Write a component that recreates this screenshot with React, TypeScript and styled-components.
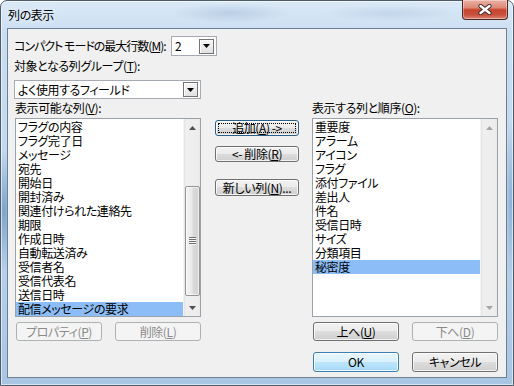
import React from "react";
import styled, { createGlobalStyle } from "styled-components";

const Global = createGlobalStyle`
  html, body { margin: 0; padding: 0; background: #ffffff; }
  body {
    font-family: "Noto Sans CJK JP", "Noto Sans", sans-serif;
    font-size: 12px;
    color: #000;
    font-feature-settings: "palt" 1;
    letter-spacing: -0.4px;
  }
  * { box-sizing: border-box; }
`;

const Window = styled.div`
  width: 514px;
  height: 386px;
  display: flex;
  flex-direction: column;
  border: 1px solid #4f5b68;
  border-radius: 7px 7px 0 0;
  box-shadow: inset 0 0 0 1px rgba(255, 255, 255, 0.55);
  background:
    radial-gradient(ellipse 60px 10px at 230px 12px, rgba(120, 150, 190, 0.28), transparent),
    radial-gradient(ellipse 70px 8px at 390px 12px, rgba(130, 160, 200, 0.22), transparent),
    radial-gradient(ellipse 10px 60px at 3px 210px, rgba(70, 120, 175, 0.55), transparent),
    radial-gradient(ellipse 6px 80px at 510px 200px, rgba(80, 130, 185, 0.45), transparent),
    linear-gradient(to bottom, #dae9f7 0%, #cadef1 9%, #bdd5ed 55%, #a8c5e3 100%);
`;

const TitleBar = styled.div`
  height: 27px;
  display: flex;
  align-items: flex-start;
  padding-left: 7px;
`;

const TitleText = styled.div`
  margin-top: 7px;
  font-size: 12px;
  line-height: 14px;
  color: #000;
  text-shadow: 0 0 6px rgba(255, 255, 255, 0.9);
`;

const CloseButton = styled.div`
  margin-left: auto;
  margin-right: 5px;
  margin-top: -1px;
  width: 46px;
  height: 20px;
  border: 1px solid #4d2a24;
  border-top: none;
  border-radius: 0 0 4px 4px;
  display: flex;
  align-items: center;
  justify-content: center;
  background: linear-gradient(
    to bottom,
    #eab1a5 0%,
    #dc8a78 40%,
    #c8442d 52%,
    #c95240 80%,
    #dc8a7a 100%
  );
  box-shadow: inset 0 0 0 1px rgba(255, 255, 255, 0.35);
`;

const Client = styled.div`
  flex: 1;
  margin: 0 6px 7px 6px;
  border: 1px solid #6d7f93;
  background: #f0f0f0;
  display: flex;
  flex-direction: column;
  padding: 7px 0 0 6px;
`;

const Row = styled.div`
  display: flex;
  align-items: center;
  height: 20px;
`;

const Label = styled.div<{ $w?: number; $mt?: number; $tight?: boolean }>`
  width: ${(p) => (p.$w ? `${p.$w}px` : "auto")};
  margin-top: ${(p) => p.$mt ?? 0}px;
  line-height: 14px;
  height: 14px;
  white-space: nowrap;
  letter-spacing: ${(p) => (p.$tight ? "-1px" : "inherit")};
`;

const Combo = styled.div<{ $w: number; $h: number; $mt?: number }>`
  width: ${(p) => p.$w}px;
  height: ${(p) => p.$h}px;
  margin-top: ${(p) => p.$mt ?? 0}px;
  border: 1px solid #a6abb3;
  background: #fff;
  display: flex;
  align-items: center;
  padding: 0 2px 0 3px;
`;

const ComboText = styled.div`
  flex: 1;
  line-height: 14px;
  white-space: nowrap;
`;

const DropButton = styled.div`
  width: 15px;
  height: 15px;
  border: 1px solid #747474;
  background: linear-gradient(to bottom, #f6f6f6, #e2e2e2);
  box-shadow: inset 1px 1px 0 #ffffff;
  display: flex;
  align-items: center;
  justify-content: center;
`;

const MainGrid = styled.div`
  margin-top: 2px;
  margin-left: 1px;
  display: grid;
  grid-template-columns: 186px 85px 186px;
  column-gap: 13px;
  align-items: start;
`;

const ListBox = styled.div`
  margin-top: 3px;
  width: 186px;
  height: 199px;
  border: 1px solid #9ba1a9;
  background: #ffffff;
  display: flex;
`;

const Items = styled.div`
  flex: 1;
  padding-top: 1px;
  overflow: hidden;
`;

const Item = styled.div<{ $selected?: boolean }>`
  height: 14px;
  line-height: 14px;
  padding-left: 2px;
  white-space: nowrap;
  background: ${(p) => (p.$selected ? "#8cbdf6" : "transparent")};
`;

const ScrollBar = styled.div`
  width: 17px;
  display: flex;
  flex-direction: column;
  background: linear-gradient(to right, #e2e2e2 0, #efefef 2px, #ededed 14px, #e6e6e6 17px);
  border-left: 1px solid #f4f4f4;
`;

const ArrowBox = styled.div`
  height: 17px;
  display: flex;
  align-items: center;
  justify-content: center;
`;

const Track = styled.div`
  flex: 1;
  display: flex;
  flex-direction: column;
  align-items: center;
`;

const Thumb = styled.div<{ $top: number; $h: number }>`
  margin-top: ${(p) => p.$top}px;
  width: 15px;
  height: ${(p) => p.$h}px;
  border: 1px solid #959595;
  border-radius: 2px;
  background: linear-gradient(to right, #f4f4f4 0%, #e9e9e9 45%, #dadada 55%, #d2d2d2 100%);
  box-shadow: inset 0 0 0 1px rgba(255, 255, 255, 0.6);
  display: flex;
  align-items: center;
  justify-content: center;
`;

const Grip = styled.div`
  width: 7px;
  height: 8px;
  background: repeating-linear-gradient(to bottom, #6f6f6f 0 1px, #f6f6f6 1px 2px);
`;

const MidColumn = styled.div`
  margin-top: 19px;
  justify-self: end;
  width: 84px;
  display: flex;
  flex-direction: column;
`;

const PushButton = styled.div<{
  $h?: number;
  $mt?: number;
  $disabled?: boolean;
  $default?: boolean;
  $focused?: boolean;
}>`
  position: relative;
  width: 86px;
  height: ${(p) => p.$h ?? 19}px;
  margin-top: ${(p) => p.$mt ?? 0}px;
  border: 1px solid
    ${(p) => (p.$disabled ? "#adb2b5" : p.$default ? "#3c7fb1" : p.$focused ? "#2a5f88" : "#707070")};
  border-radius: 3px;
  display: flex;
  align-items: center;
  justify-content: center;
  line-height: 14px;
  white-space: nowrap;
  color: ${(p) => (p.$disabled ? "#8a8a8a" : "#000")};
  background: ${(p) =>
    p.$disabled
      ? "#f4f4f4"
      : p.$default
      ? "linear-gradient(to bottom, #eaf6fd 0%, #d9f0fc 49%, #bee6fd 50%, #a7d9f5 100%)"
      : "linear-gradient(to bottom, #f2f2f2 0%, #ebebeb 49%, #dddddd 50%, #cfcfcf 100%)"};
  box-shadow: ${(p) => (p.$disabled ? "none" : "inset 0 0 0 1px rgba(255,255,255,0.75)")};

  &::after {
    content: "";
    display: ${(p) => (p.$focused ? "block" : "none")};
    position: absolute;
    inset: 2px;
    border: 1px dotted #000;
  }
`;

const MidButton = styled(PushButton)`
  width: 84px;
`;

const ButtonPair = styled.div<{ $mt: number }>`
  margin-top: ${(p) => p.$mt}px;
  padding-left: 1px;
  display: flex;
  justify-content: space-between;
`;

const FooterCell = styled.div`
  grid-column: 3;
`;

const Arrow = ({ up, color }: { up?: boolean; color: string }) => (
  <svg width="7" height="4" viewBox="0 0 7 4">
    <polygon points={up ? "3.5,0 7,4 0,4" : "0,0 7,0 3.5,4"} fill={color} />
  </svg>
);

const ComboArrow = () => (
  <svg width="7" height="4" viewBox="0 0 7 4">
    <polygon points="0,0 7,0 3.5,4" fill="#000" />
  </svg>
);

const CloseX = () => (
  <svg width="14" height="11" viewBox="0 0 14 11">
    <path d="M2.5 2 L11.5 9 M11.5 2 L2.5 9" stroke="#3b2a2a" strokeWidth="4.2" strokeLinecap="round" />
    <path d="M2.5 2 L11.5 9 M11.5 2 L2.5 9" stroke="#ffffff" strokeWidth="2.4" strokeLinecap="round" />
  </svg>
);

const available = [
  "フラグの内容",
  "フラグ完了日",
  "メッセージ",
  "宛先",
  "開始日",
  "開封済み",
  "関連付けられた連絡先",
  "期限",
  "作成日時",
  "自動転送済み",
  "受信者名",
  "受信代表名",
  "送信日時",
  "配信メッセージの要求",
];

const shown = [
  "重要度",
  "アラーム",
  "アイコン",
  "フラグ",
  "添付ファイル",
  "差出人",
  "件名",
  "受信日時",
  "サイズ",
  "分類項目",
  "秘密度",
];

type ListProps = {
  items: string[];
  selected: number;
  thumb?: { top: number; h: number };
};

const List = ({ items, selected, thumb }: ListProps) => {
  const arrowColor = thumb ? "#505050" : "#a6a6a6";
  return (
    <ListBox>
      <Items>
        {items.map((t, i) => (
          <Item key={t} $selected={i === selected}>
            {t}
          </Item>
        ))}
      </Items>
      <ScrollBar>
        <ArrowBox>
          <Arrow up color={arrowColor} />
        </ArrowBox>
        <Track>
          {thumb && (
            <Thumb $top={thumb.top} $h={thumb.h}>
              <Grip />
            </Thumb>
          )}
        </Track>
        <ArrowBox>
          <Arrow color={arrowColor} />
        </ArrowBox>
      </ScrollBar>
    </ListBox>
  );
};

export default function App() {
  return (
    <>
      <Global />
      <Window>
        <TitleBar>
          <TitleText>列の表示</TitleText>
          <CloseButton>
            <CloseX />
          </CloseButton>
        </TitleBar>
        <Client>
          <Row>
            <Label $w={157} $tight>
              コンパクト モードの最大行数(<u>M</u>):
            </Label>
            <Combo $w={46} $h={20}>
              <ComboText>2</ComboText>
              <DropButton>
                <ComboArrow />
              </DropButton>
            </Combo>
          </Row>
          <Label $mt={3}>
            対象となる列グループ(<u>T</u>):
          </Label>
          <Combo $w={187} $h={19} $mt={7}>
            <ComboText>よく使用するフィールド</ComboText>
            <DropButton>
              <ComboArrow />
            </DropButton>
          </Combo>
          <MainGrid>
            <div>
              <Label>
                表示可能な列(<u>V</u>):
              </Label>
              <List items={available} selected={13} thumb={{ top: 50, h: 110 }} />
              <ButtonPair $mt={5}>
                <PushButton $disabled>
                  プロパティ(<u>P</u>)
                </PushButton>
                <PushButton $disabled>
                  削除(<u>L</u>)
                </PushButton>
              </ButtonPair>
            </div>
            <MidColumn>
              <MidButton $h={16} $focused>
                追加(<u>A</u>) -&gt;
              </MidButton>
              <MidButton $h={16} $mt={10}>
                &lt;- 削除(<u>R</u>)
              </MidButton>
              <MidButton $h={17} $mt={17}>
                新しい列(<u>N</u>)...
              </MidButton>
            </MidColumn>
            <div>
              <Label>
                表示する列と順序(<u>O</u>):
              </Label>
              <List items={shown} selected={10} />
              <ButtonPair $mt={5}>
                <PushButton>
                  上へ(<u>U</u>)
                </PushButton>
                <PushButton $disabled>
                  下へ(<u>D</u>)
                </PushButton>
              </ButtonPair>
            </div>
            <FooterCell>
              <ButtonPair $mt={11}>
                <PushButton $h={20} $default>
                  OK
                </PushButton>
                <PushButton $h={20}>キャンセル</PushButton>
              </ButtonPair>
            </FooterCell>
          </MainGrid>
        </Client>
      </Window>
    </>
  );
}
